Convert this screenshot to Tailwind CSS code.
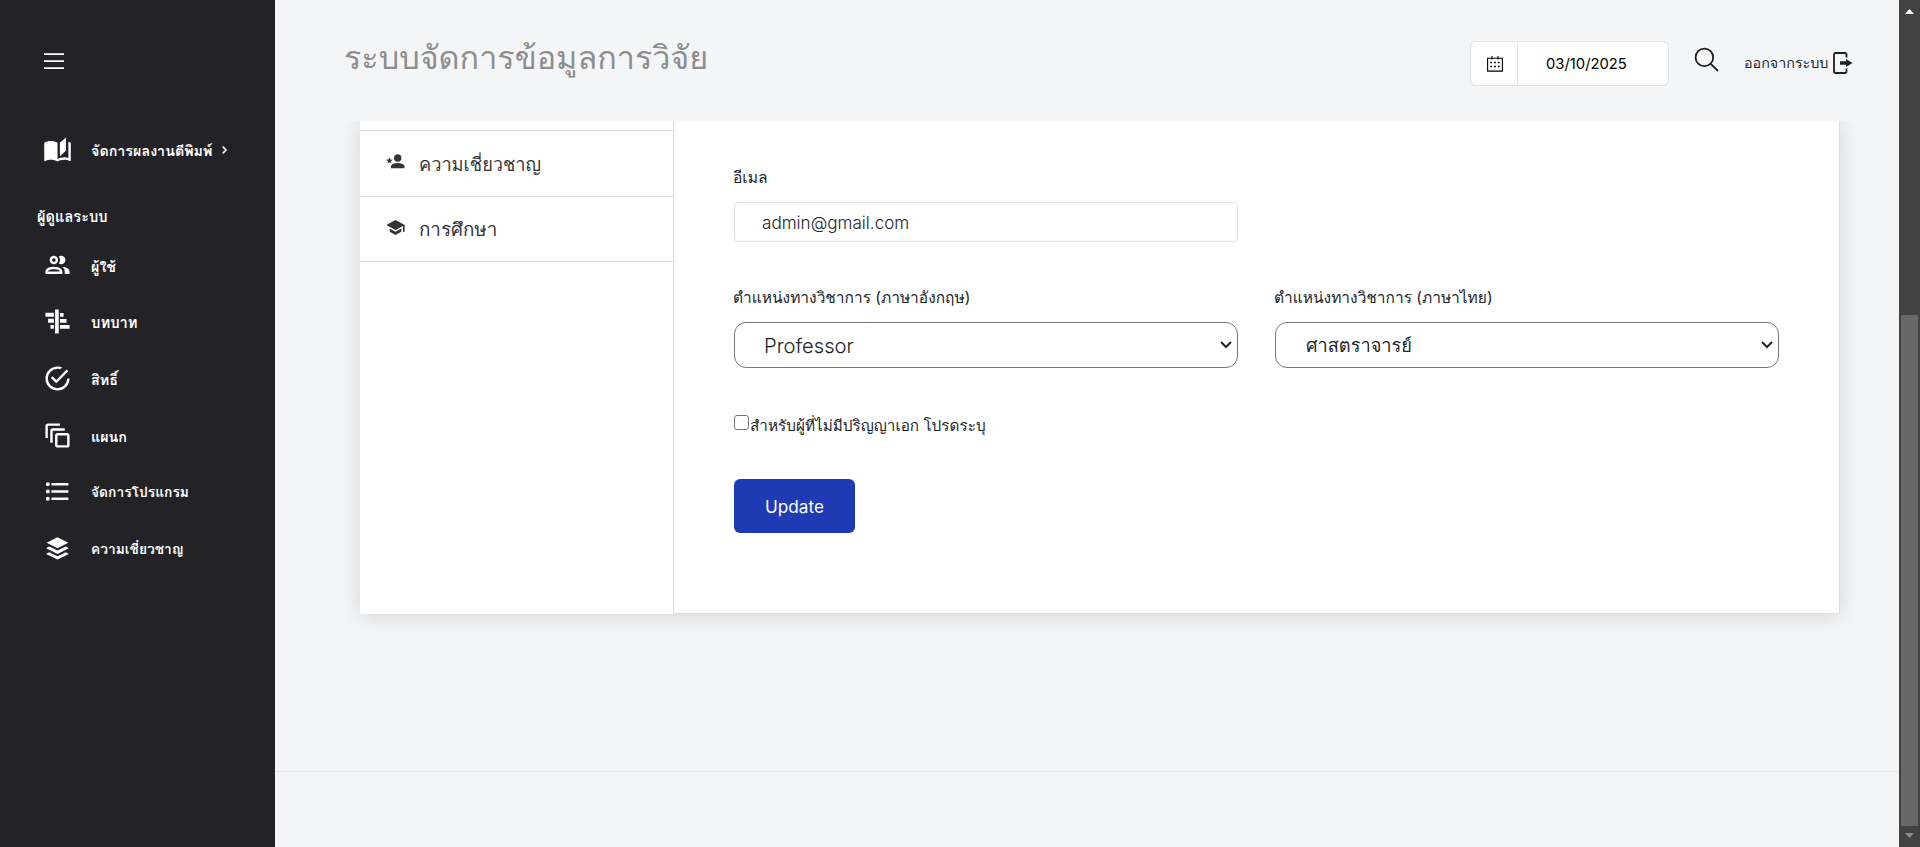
<!DOCTYPE html>
<html lang="th">
<head>
<meta charset="utf-8">
<title>ระบบจัดการข้อมูลการวิจัย</title>
<script src="https://cdn.jsdelivr.net/npm/@tailwindcss/browser@4"></script>
</head>
<body class="flex h-[847px] w-[1920px] overflow-hidden bg-[#f4f5f7] font-['Inter','Tahoma','Waree','Loma','Noto_Sans_Thai_Looped','Noto_Sans_Thai',sans-serif] text-[#212529]">

<aside class="flex w-[275px] shrink-0 flex-col bg-[#222227] text-white">
  <div class="flex h-[121px] items-center pl-11">
    <svg class="h-[18px] w-5" viewBox="0 0 20 18" fill="#fff"><path d="M0 1.2h20v1.8H0zM0 8.2h20V10H0zM0 15.2h20V17H0z"/></svg>
  </div>
  <nav class="flex flex-col text-[13.8px] font-semibold">
    <a class="flex h-[57px] items-center gap-5 pl-[43px]">
      <svg class="size-[29px]" viewBox="0 0 24 24" fill="currentColor"><path d="M19 2L14 6.5V17.5L19 13V2M6.5 5C4.55 5 2.45 5.4 1 6.5V21.16C1 21.41 1.25 21.66 1.5 21.66C1.6 21.66 1.65 21.59 1.75 21.59C3.1 20.94 5.05 20.5 6.5 20.5C8.45 20.5 10.55 20.9 12 22C13.35 21.15 15.8 20.5 17.5 20.5C19.15 20.5 20.85 20.81 22.25 21.56C22.35 21.61 22.4 21.59 22.5 21.59C22.75 21.59 23 21.34 23 21.09V6.5C22.4 6.05 21.75 5.75 21 5.5V19C19.9 18.65 18.7 18.5 17.5 18.5C15.8 18.5 13.35 19.15 12 20V6.5C10.55 5.4 8.45 5 6.5 5Z"/></svg>
      <span class="-ml-px w-[122px] pt-0.5 whitespace-nowrap text-[14.3px]">จัดการผลงานตีพิมพ์</span>
      <svg class="-ml-[11px] h-2 w-[5px]" viewBox="0 0 5 8" fill="none" stroke="#fff" stroke-width="1.7"><path d="M.7.7L4 4L.7 7.3"/></svg>
    </a>
    <div class="flex h-[59px] items-end pb-2 pl-[37px] text-[14.6px] font-bold"><span class="whitespace-nowrap">ผู้ดูแลระบบ</span></div>
    <a class="flex h-[56.6px] items-center gap-5 pl-[43px]">
      <svg class="size-[29px]" viewBox="0 0 24 24" fill="currentColor"><path d="M13.07 10.41A5 5 0 0 0 13.07 4.59A3.39 3.39 0 0 1 15 4A3.5 3.5 0 0 1 15 11A3.39 3.39 0 0 1 13.07 10.41M5.5 7.5A3.5 3.5 0 1 1 9 11A3.5 3.5 0 0 1 5.5 7.5M7.5 7.5A1.5 1.5 0 1 0 9 6A1.5 1.5 0 0 0 7.5 7.5M16 17V19H2V17S2 13 9 13 16 17 16 17M14 17C13.86 16.22 12.67 15 9 15S4.07 16.31 4 17M15.95 13A5.32 5.32 0 0 1 18 17V19H22V17S22 13.37 15.94 13Z"/></svg>
      <span class="-ml-px pt-0.5 text-[14.3px]">ผู้ใช้</span>
    </a>
    <a class="flex h-[56.6px] items-center gap-5 pl-[43px]">
      <svg class="size-[29px]" viewBox="0 0 24 24" fill="currentColor"><path d="M10 2h3v20h-3zM2 4.8h7v3.2H2zM4.2 9.8H9V13H4.2zM6.2 14.8H9V18H6.2zM14 5h3v3h-3zM14 10h5.5v3H14zM14 14.8h8V18h-8z"/></svg>
      <span class="-ml-px pt-[3px] text-[14.8px]">บทบาท</span>
    </a>
    <a class="flex h-[56.6px] items-center gap-5 pl-[43px]">
      <svg class="size-[29px]" viewBox="0 0 24 24" fill="currentColor"><path d="M20,12A8,8 0 0,1 12,20A8,8 0 0,1 4,12A8,8 0 0,1 12,4C12.76,4 13.5,4.11 14.2,4.31L15.77,2.74C14.61,2.26 13.34,2 12,2A10,10 0 0,0 2,12A10,10 0 0,0 12,22A10,10 0 0,0 22,12M7.91,10.08L6.5,11.5L11,16L21,6L19.59,4.58L11,13.17L7.91,10.08Z"/></svg>
      <span class="-ml-px pt-0.5 text-[14.3px]">สิทธิ์</span>
    </a>
    <a class="flex h-[56.6px] items-center gap-5 pl-[43px]">
      <svg class="size-[29px]" viewBox="0 0 24 24" fill="currentColor"><path d="M4,2C2.89,2 2,2.89 2,4V14H4V4H14V2H4M8,6C6.89,6 6,6.89 6,8V18H8V8H18V6H8M20,12V20H12V12H20M20,10H12C10.89,10 10,10.89 10,12V20C10,21.11 10.89,22 12,22H20C21.11,22 22,21.11 22,20V12C22,10.89 21.11,10 20,10Z"/></svg>
      <span class="-ml-px pt-[3px] text-[14.3px]">แผนก</span>
    </a>
    <a class="flex h-[56.6px] items-center gap-5 pl-[43px]">
      <svg class="size-[29px]" viewBox="0 0 24 24" fill="currentColor"><path d="M7,5H21V7H7V5M7,13V11H21V13H7M7,19V17H21V19H7"/><circle cx="4" cy="6" r="1.6"/><circle cx="4" cy="12" r="1.6"/><circle cx="4" cy="18" r="1.6"/></svg>
      <span class="-ml-px pt-0.5">จัดการโปรแกรม</span>
    </a>
    <a class="flex h-[56.6px] items-center gap-5 pl-[43px]">
      <svg class="size-[29px]" viewBox="0 0 24 24" fill="currentColor"><path d="M12 2.7L21 7.2L12 11.7L3 7.2zM3 11.4L5.2 10.3L12 13.7L18.8 10.3L21 11.4V12L12 16.5L3 12zM3 16.1L5.2 15L12 18.4L18.8 15L21 16.1V16.7L12 21.2L3 16.7z"/></svg>
      <span class="-ml-px pt-[3px]">ความเชี่ยวชาญ</span>
    </a>
  </nav>
</aside>

<div class="flex w-[1624px] shrink-0 flex-col">
  <header class="flex h-[121px] shrink-0 items-start pl-[69px]">
    <h1 class="mt-[33px] w-[362px] whitespace-nowrap text-[32.3px] leading-[50px] font-medium text-[#8d8d8d]">ระบบจัดการข้อมูลการวิจัย</h1>
    <div class="mt-[41px] ml-[764px] flex h-[45px] w-[199px] rounded-md border border-[#dee2e6] bg-white py-px">
      <div class="flex w-[47px] items-center justify-center border-r border-[#dee2e6]">
        <svg class="ml-0.5 size-4" viewBox="0 0 16 16" fill="none" stroke="#000" stroke-width="1.1"><path d="M.6 2.3h14.8v12.8H.6zM5 0v3.5M11 0v3.5"/><path d="M3.3 6.5h1.8M7.1 6.5h1.8M10.9 6.5h1.8M3.3 10.5h1.8M7.1 10.5h1.8M10.9 10.5h1.8" stroke-width="1.6"/></svg>
      </div>
      <div class="flex flex-1 items-center pt-px pl-7 text-[14.8px] text-black"><span class="whitespace-nowrap">03/10/2025</span></div>
    </div>
    <svg class="mt-[47px] ml-[25px] size-[25px]" viewBox="0 0 25 25" fill="none" stroke="#1f1f1f" stroke-width="1.8"><circle cx="10.4" cy="10.4" r="8.8"/><path d="M16.8 16.8L24 24"/></svg>
    <a class="mt-[50px] ml-[25px] flex h-6 items-center gap-1.5 text-[14.3px]">
      <span class="w-[83px] pt-0.5 whitespace-nowrap">ออกจากระบบ</span>
      <svg class="mt-0.5 h-[22px] w-5" viewBox="0 0 20 22" fill="none" stroke="#1f1f1f" stroke-width="1.8"><path d="M13.5 5.5V2.2L12.3 1H2.2L1 2.2V19.8L2.2 21H12.3L13.5 19.8V16.5"/><path d="M7 9.2h6V7l6.5 4l-6.5 4v-2.2H7z" fill="#1f1f1f" stroke="none"/></svg>
    </a>
  </header>

  <div class="h-[651px] shrink-0 overflow-hidden border-b border-[#e3e5e8] pl-[85px]">
    <div class="flex h-[493px] w-[1480px] bg-white shadow-[0_2px_20px_rgba(0,0,0,0.13)]">
      <div class="w-[314px] border-r border-[#dcdee0] text-[18.2px] text-[#343434]">
        <div class="h-2.5 border-b border-[#dcdcdc]"></div>
        <div class="flex h-[66px] items-center gap-3.5 border-b border-[#dcdcdc] pl-[26px]">
          <svg class="-mt-1 h-[15px] w-[19px]" viewBox="0 0 19 15" fill="currentColor"><circle cx="11.7" cy="4" r="3.7"/><path d="M5 14.2V12.5C5 9.8 9.5 9 11.7 9S18.5 9.8 18.5 12.5V14.2zM3.4 3.2L4.3 5.6L6.8 5.7L4.8 7.2L5.5 9.6L3.4 8.2L1.3 9.6L2 7.2L0 5.7L2.5 5.6z"/></svg>
          <span class="pt-0.5 whitespace-nowrap">ความเชี่ยวชาญ</span>
        </div>
        <div class="flex h-[65px] items-center gap-3.5 border-b border-[#dcdcdc] pt-px pl-[26px]">
          <svg class="-mt-[5px] h-[15px] w-[19px]" viewBox="1 3 22 18" fill="currentColor"><path d="M12,3L1,9L12,15L21,10.09V17H23V9M5,13.18V17.18L12,21L19,17.18V13.18L12,17L5,13.18Z"/></svg>
          <span class="pt-0.5 whitespace-nowrap text-[18.8px]">การศึกษา</span>
        </div>
      </div>
      <form class="flex flex-1 flex-col border-r border-b border-[#dcdee0] pt-[43px] pl-[59px]">
        <label class="flex h-[38px] items-start text-[15.6px] leading-7"><span class="whitespace-nowrap">อีเมล</span></label>
        <div class="ml-px flex h-10 w-[504px] items-center rounded border border-[#dee2e6] pt-0.5 pl-[27px] text-[17.1px] font-light"><span>admin@gmail.com</span></div>
        <div class="mt-[42px] ml-px grid grid-cols-[504px_504px] gap-x-[37px]">
          <label class="-ml-px h-[38px] text-[15.5px] leading-7"><span class="whitespace-nowrap">ตำแหน่งทางวิชาการ (ภาษาอังกฤษ)</span></label>
          <label class="-ml-px h-[38px] text-[15.5px] leading-7"><span class="whitespace-nowrap">ตำแหน่งทางวิชาการ (ภาษาไทย)</span></label>
          <div class="flex h-[46px] items-center justify-between rounded-xl border border-[#767676] pr-[5px] pl-[29px] text-[20.2px] font-light"><span class="pt-0.5">Professor</span>
            <svg class="h-2 w-3" viewBox="0 0 12 8" fill="none" stroke="#212529" stroke-width="2"><path d="M1 1L6 6L11 1"/></svg></div>
          <div class="flex h-[46px] items-center justify-between rounded-xl border border-[#767676] pr-[5px] pl-[30px] text-[18.2px]"><span class="pt-0.5 whitespace-nowrap">ศาสตราจารย์</span>
            <svg class="h-2 w-3" viewBox="0 0 12 8" fill="none" stroke="#212529" stroke-width="2"><path d="M1 1L6 6L11 1"/></svg></div>
        </div>
        <div class="mt-[43px] ml-px flex h-7 items-center text-[15.3px]">
          <i class="-mt-1.5 size-[15px] rounded-[3px] border border-[#767676]"></i>
          <span class="ml-px pt-0.5 whitespace-nowrap">สำหรับผู้ที่ไม่มีปริญญาเอก โปรดระบุ</span>
        </div>
        <button type="button" class="mt-10 ml-px h-[54px] w-[121px] rounded-md bg-[#1f3bb3] pt-px text-[17.2px] text-white">Update</button>
      </form>
    </div>
  </div>
</div>

<div class="flex w-[21px] shrink-0 flex-col items-center bg-[#424242]">
  <svg class="mt-[9px] h-[5px] w-[9px]" viewBox="0 0 9 5" fill="#fff"><path d="M0 5L4.5 0L9 5z"/></svg>
  <div class="mt-[301px] h-[511px] w-[17px] bg-[#686868]"></div>
  <svg class="mt-[7px] h-[5px] w-[9px]" viewBox="0 0 9 5" fill="#8a8a8a"><path d="M0 0L4.5 5L9 0z"/></svg>
</div>
</body>
</html>
